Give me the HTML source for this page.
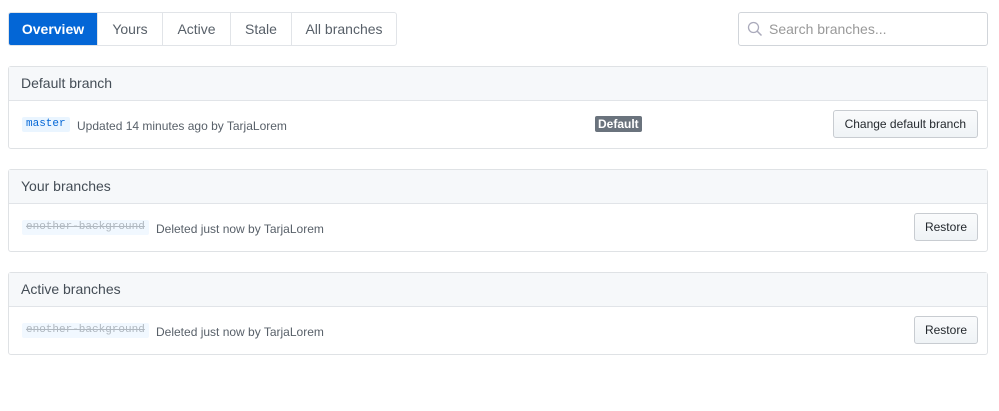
<!DOCTYPE html>
<html><head><style>
*{box-sizing:border-box;margin:0;padding:0}
body{width:999px;height:411px;background:#fff;font-family:"Liberation Sans",sans-serif;color:#24292e;position:relative;overflow:hidden}
.tabs{position:absolute;left:8px;top:12px;height:34px;display:flex;border:1px solid #e1e4e8;border-radius:3px;overflow:hidden}
.tabs div{height:32px;line-height:32px;font-size:14px;color:#586069;border-left:1px solid #e1e4e8;text-align:center}
.tabs div:first-child{border-left:none;background:#0366d6;color:#fff;font-weight:bold}
.search{position:absolute;left:738px;top:12px;width:250px;height:34px;border:1px solid #d1d5da;border-radius:3px;font-size:14px;color:#999;line-height:32px;padding-left:30px}
.search svg{position:absolute;left:8px;top:8px}
.box{position:absolute;left:8px;width:980px;border:1px solid #dfe2e5;border-radius:3px}
.hd{height:34px;background:#f6f8fa;border-bottom:1px solid #e1e4e8;font-size:14px;color:#444d56;line-height:33px;padding-left:12px}
.row{height:47px;position:relative;font-size:12px;color:#586069}
.br{position:absolute;left:13px;top:16px;font-family:"Liberation Mono",monospace;font-size:11px;background:#eaf5ff;color:#0366d6;padding:1px 4px 2px;border-radius:2px}
.br.del{color:#b0b8c0;text-decoration:line-through;background:#f1f8ff}
.txt{position:absolute;top:18px}
.btn{position:absolute;top:9px;right:9px;height:28px;border:1px solid #c8ccd1;border-radius:3px;background:linear-gradient(#fafbfc,#eff3f6);font-size:12px;color:#24292e;line-height:26px;padding:0 10px}
.lbl{position:absolute;left:586px;top:15px;background:#6a737d;color:#fff;font-size:12px;font-weight:bold;padding:1px 3px;border-radius:2px}
</style></head><body>
<div class="tabs"><div style="width:88px">Overview</div><div style="width:65px">Yours</div><div style="width:68px">Active</div><div style="width:61px">Stale</div><div style="width:105px">All branches</div></div>
<div class="search"><svg width="16" height="16" viewBox="0 0 16 16"><circle cx="6.5" cy="6.5" r="5" fill="none" stroke="#aab" stroke-width="1.3"/><path d="M10 10L14.5 14.5" stroke="#aab" stroke-width="1.5"/></svg>Search branches...</div>
<div class="box" style="top:66px"><div class="hd">Default branch</div><div class="row"><span class="br">master</span><span class="txt" style="left:68px">Updated 14 minutes ago by TarjaLorem</span><span class="lbl">Default</span><span class="btn" style="padding:0 11px">Change default branch</span></div></div>
<div class="box" style="top:169px"><div class="hd">Your branches</div><div class="row"><span class="br del">enother-background</span><span class="txt" style="left:147px">Deleted just now by TarjaLorem</span><span class="btn">Restore</span></div></div>
<div class="box" style="top:272px"><div class="hd">Active branches</div><div class="row"><span class="br del">enother-background</span><span class="txt" style="left:147px">Deleted just now by TarjaLorem</span><span class="btn">Restore</span></div></div>
</body></html>
